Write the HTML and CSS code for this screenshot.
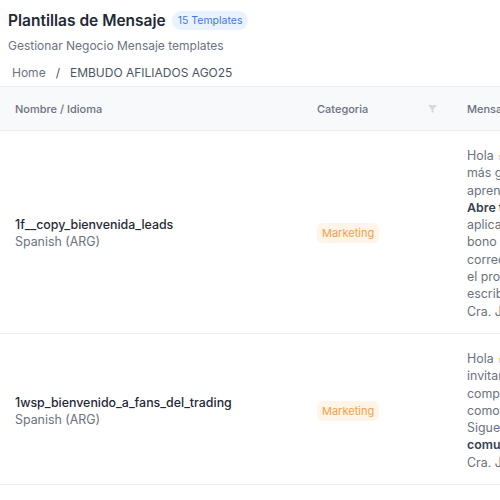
FILE: index.html
```html
<!DOCTYPE html>
<html lang="es">
<head>
  <meta charset="UTF-8" />
  <title>Plantillas de Mensaje</title>
  <link rel="stylesheet" href="styles.css">
</head>
<body>
  <div class="page">
    <div class="page-head">
      <h1>Plantillas de Mensaje</h1>
      <span class="count">15 Templates</span>
    </div>
    <p class="subtitle">Gestionar Negocio Mensaje templates</p>
    <div class="crumbs">
      <span class="crumb-home">Home</span>
      <span class="crumb-sep">/</span>
      <span class="crumb-current">EMBUDO AFILIADOS AGO25</span>
    </div>
  </div>

  <table class="templates">
    <thead>
      <tr>
        <th class="col-name">Nombre / Idioma</th>
        <th class="col-cat">
          <div class="th-filter">
            <span>Categoria</span>
            <svg width="9" height="8" viewBox="0 0 9 8"><path d="M0 0h9L5.5 4.2V8L3.5 7V4.2z" fill="#d6d9de"/></svg>
          </div>
        </th>
        <th class="col-msg">Mensaje</th>
      </tr>
    </thead>
    <tbody>
      <tr>
        <td>
          <div class="tpl-name">1f__copy_bienvenida_leads</div>
          <div class="tpl-lang">Spanish (ARG)</div>
        </td>
        <td><span class="tag">Marketing</span></td>
        <td class="msg">
          Hola 👋 ¿quieres<br>
          más ganancias?<br>
          aprende con nosotros<br>
          <b>Abre tu cuenta</b><br>
          aplica al<br>
          bono de<br>
          correo<br>
          el proceso<br>
          escribenos<br>
          Cra. Juan
        </td>
      </tr>
      <tr>
        <td>
          <div class="tpl-name">1wsp_bienvenido_a_fans_del_trading</div>
          <div class="tpl-lang">Spanish (ARG)</div>
        </td>
        <td><span class="tag">Marketing</span></td>
        <td class="msg">
          Hola 👋 te<br>
          invitamos<br>
          comparte<br>
          como<br>
          Sigue la<br>
          <b>comunidad</b><br>
          Cra. Juan
        </td>
      </tr>
    </tbody>
  </table>
</body>
</html>
```

FILE: styles.css
```css
body {
  margin: 0;
  font-family: Inter, "Noto Sans", sans-serif;
  color: #1f2937;
  background: #fff;
  overflow: hidden;
  width: 500px;
}

.page {
  padding: 11px 8px 0;
}

.page-head {
  display: flex;
  align-items: center;
  gap: 6px;
}

.page-head h1 {
  margin: 0;
  font-size: 15.5px;
  font-weight: 600;
  color: #1f2937;
}

.count {
  background: #eaf2fe;
  color: #3b7ddd;
  font-size: 10.5px;
  padding: 3px 6px;
  border-radius: 10px;
}

.subtitle {
  margin: 8px 0 0;
  font-size: 12px;
  color: #6b7280;
}

.crumbs {
  display: flex;
  gap: 10px;
  padding: 12px 4px 6px;
  font-size: 12px;
  color: #4b5563;
}

.crumb-home {
  color: #6b7280;
}

.templates {
  border-collapse: collapse;
  width: 760px;
  table-layout: fixed;
}

.templates th {
  background: #f8f9fb;
  border-top: 1px solid #eceef1;
  border-bottom: 1px solid #eceef1;
  text-align: left;
  font-size: 11px;
  font-weight: 500;
  color: #6b7280;
  height: 43px;
  padding: 0 15px;
}

.col-name { width: 272px; }
.col-cat { width: 120px; }

.th-filter {
  display: flex;
  justify-content: space-between;
  align-items: center;
}

.templates td {
  border-bottom: 1px solid #eceef1;
  padding: 16px 15px 13px;
  vertical-align: middle;
  font-size: 12.4px;
}

.tpl-name {
  font-weight: 500;
  color: #1f2937;
}

.tpl-lang {
  margin-top: 2px;
  color: #6b7280;
}

.tag {
  display: inline-block;
  background: #fff4e8;
  color: #f5a04a;
  font-size: 11px;
  padding: 3px 5px;
  border-radius: 6px;
}

.msg {
  line-height: 17.3px;
  color: #6b7280;
  white-space: nowrap;
}

.msg b {
  color: #374151;
  font-weight: 600;
}
```
